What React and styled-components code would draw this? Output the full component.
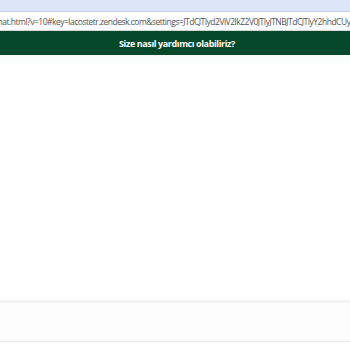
import React from 'react';
import styled, {createGlobalStyle} from 'styled-components';

const Global = createGlobalStyle`
  html, body {
    margin: 0;
    padding: 0;
    background: #ffffff;
    font-family: "Open Sans", "Noto Sans", sans-serif;
  }
`

const Page = styled.div`
  width: 350px;
  height: 350px;
  display: flex;
  flex-direction: column;
  overflow: hidden;
  background: #ffffff;
`

const TitleStrip = styled.div`
  height: 11px;
  background: #dbe5f8;
  border-bottom: 1px solid #c7d2e6;
`

const AddressBar = styled.div`
  height: 18px;
  display: flex;
  align-items: center;
  background: #ffffff;
  border-bottom: 1px solid #d5d5d5;
  overflow: hidden;
`

const Url = styled.span`
  white-space: nowrap;
  font-size: 8.5px;
  color: #555555;
  margin-left: -6px;
  letter-spacing: -0.5px;
`

const ChatHeader = styled.header`
  height: 24px;
  display: flex;
  align-items: center;
  justify-content: center;
  padding-left: 4px;
  background: #03482a;
  color: #ffffff;
  font-size: 9px;
  font-weight: 700;
  letter-spacing: -0.4px;
`

const Intro = styled.div`
  height: 35px;
  background: linear-gradient(#f6fbf8, #ffffff 30%);
  box-shadow: 0 2px 3px rgba(0, 0, 0, 0.08);
`

const Messages = styled.main`
  flex: 1;
  background: #ffffff;
`

const Composer = styled.footer`
  height: 38px;
  border-top: 3px solid #f2f2f2;
  border-bottom: 1px solid #ececec;
  background: #fdfdfd;
`

const Spacer = styled.div`
  height: 8px;
  background: #ffffff;
`

export default function App () {
  return (
    <Page>
      <Global />
      <TitleStrip />
      <AddressBar>
        <Url>chat.html?v=10#key=lacostetr.zendesk.com&amp;settings=JTdCJTIyd2ViV2lkZ2V0JTIyJTNBJTdCJTIyY2hhdCUyM</Url>
      </AddressBar>
      <ChatHeader>Size nasıl yardımcı olabiliriz?</ChatHeader>
      <Intro />
      <Messages />
      <Composer />
      <Spacer />
    </Page>
  );
}
